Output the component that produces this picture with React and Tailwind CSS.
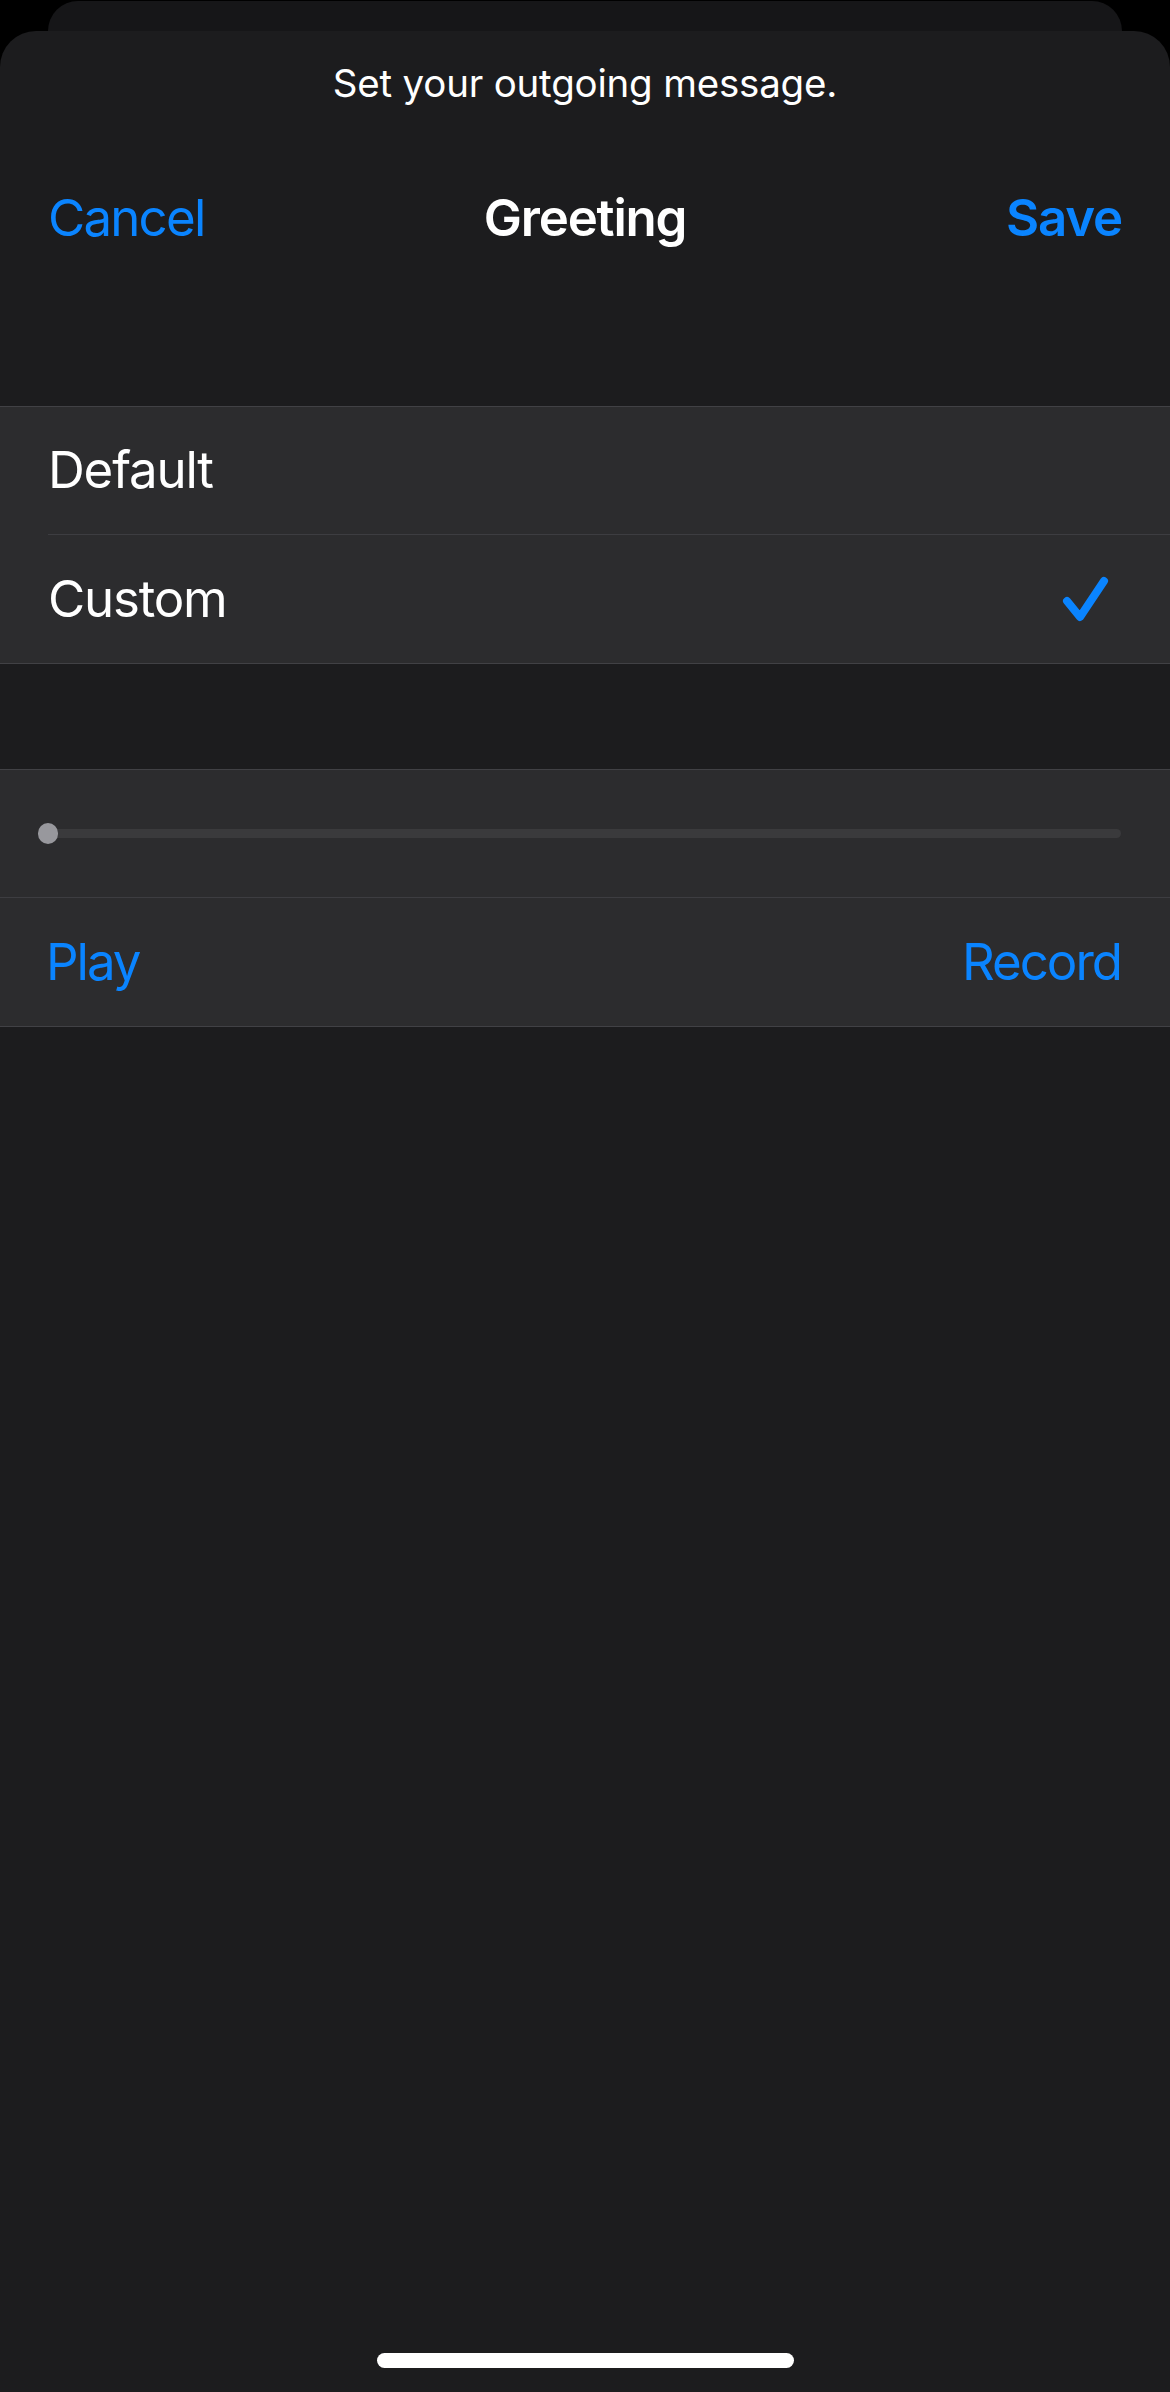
export default function App() {
  return (
    <div className="w-[1170px] h-[2392px] bg-black flex flex-col font-['Inter',sans-serif] overflow-hidden">
      <div className="h-[31px] px-[48px] pt-[1px] shrink-0">
        <div className="h-full bg-[#161618] rounded-t-[34px]" />
      </div>
      <div className="flex-1 bg-[#1c1c1e] rounded-t-[36px] flex flex-col">
        <div className="mt-[29px] h-[47px] leading-[47px] text-center text-white text-[38.5px] tracking-[-0.2px]">
          Set your outgoing message.
        </div>
        <div className="mt-[80px] h-[61px] leading-[61px] px-[48px] flex items-center text-[51px] tracking-[-1.2px]">
          <div className="flex-1 text-[#0a84ff] tracking-[-1.8px]">Cancel</div>
          <div className="text-white font-semibold">Greeting</div>
          <div className="flex-1 text-right text-[#0a84ff] font-semibold">Save</div>
        </div>
        <div className="mt-[158px] bg-[#2c2c2e] border-y border-[#414145]">
          <div className="h-[127px] flex items-center pl-[48px] text-white text-[51px] tracking-[-1.2px]">Default</div>
          <div className="h-px ml-[48px] bg-[#3d3d41]" />
          <div className="h-[128px] flex items-center justify-between pl-[48px] pr-[60px] text-white text-[51px] tracking-[-1.2px]">
            <span>Custom</span>
            <svg width="50" height="50" viewBox="0 0 50 50" fill="none">
              <polyline points="7,27 20,43 44,7" stroke="#0a84ff" strokeWidth="8" strokeLinecap="round" strokeLinejoin="round" />
            </svg>
          </div>
        </div>
        <div className="mt-[105px] bg-[#2c2c2e] border-y border-[#414145]">
          <div className="h-[127px] flex items-center pl-[48px] pr-[49px]">
            <div className="relative flex-1 h-[9px] rounded-full bg-[#3a3a3c]">
              <div className="absolute left-[-10px] top-[-6px] w-[20px] h-[21px] rounded-full bg-[#98989d]" />
            </div>
          </div>
          <div className="h-px bg-[#3d3d41]" />
          <div className="h-[128px] flex items-center justify-between pl-[46px] pr-[49px] text-[#0a84ff] text-[51px] tracking-[-2px]">
            <span>Play</span>
            <span>Record</span>
          </div>
        </div>
        <div className="flex-1" />
        <div className="flex justify-center pb-[24px]">
          <div className="w-[417px] h-[15px] rounded-full bg-white" />
        </div>
      </div>
    </div>
  );
}
